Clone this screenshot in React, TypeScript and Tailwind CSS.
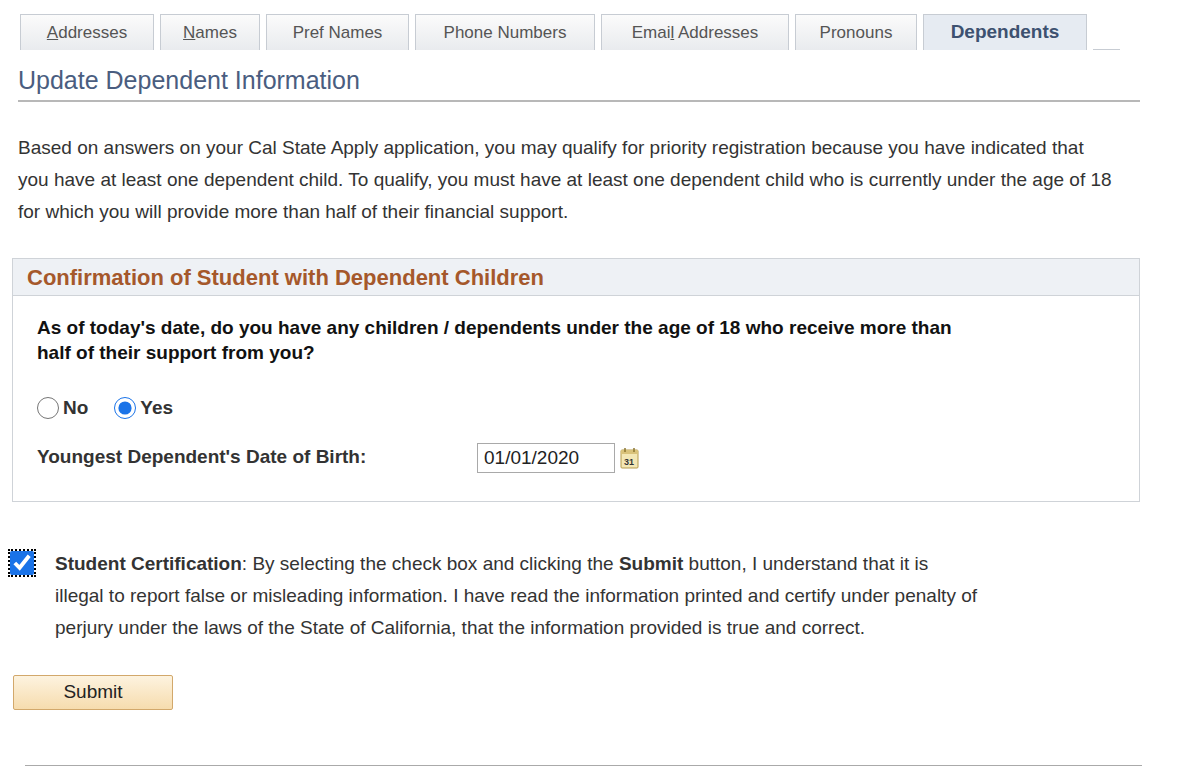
import React, { useState } from 'react';

const tabs = [
  { label: 'Addresses', u: 0, w: 134 },
  { label: 'Names', u: 0, w: 100 },
  { label: 'Pref Names', u: -1, w: 143 },
  { label: 'Phone Numbers', u: -1, w: 180 },
  { label: 'Email Addresses', u: 4, w: 188 },
  { label: 'Pronouns', u: -1, w: 122 },
];

const TabLabel = ({ label, u }: { label: string; u: number }) =>
  u < 0 ? (
    <span>{label}</span>
  ) : (
    <span className="whitespace-pre">
      {label.slice(0, u)}
      <span className="underline">{label[u]}</span>
      {label.slice(u + 1)}
    </span>
  );

const CalendarIcon = () => (
  <svg width="22" height="24" viewBox="0 0 22 24">
    <rect x="2" y="4" width="17" height="18" rx="1" fill="#f3e7b5" stroke="#b59a4a" />
    <rect x="2" y="4" width="17" height="4" fill="#d9c27a" />
    <line x1="6" y1="2" x2="6" y2="6" stroke="#8a7430" strokeWidth="1.5" />
    <line x1="15" y1="2" x2="15" y2="6" stroke="#8a7430" strokeWidth="1.5" />
    <text x="5" y="19" fontSize="9" fontWeight="bold" fill="#333" fontFamily="Liberation Sans, sans-serif">31</text>
  </svg>
);

export default function App() {
  const [answer, setAnswer] = useState('yes');
  const [certified, setCertified] = useState(true);

  return (
    <div className="w-[1200px] h-[781px] bg-white text-[#333] font-[Liberation_Sans]">
      <div className="flex items-end pl-[20px] pt-[14px] gap-[6px]">
        {tabs.map((t) => (
          <div
            key={t.label}
            style={{ width: t.w }}
            className="h-[36px] flex items-center justify-center border border-[#c7ccd3] border-b-0 bg-gradient-to-b from-[#fbfbfb] to-[#e9ebee] text-[17px] text-[#555]"
          >
            <TabLabel label={t.label} u={t.u} />
          </div>
        ))}
        <div className="w-[164px] h-[36px] flex items-center justify-center border border-[#c7ccd3] border-b-0 bg-[#e6ebf2] text-[19px] font-bold text-[#3d5170]">
          Dependents
        </div>
        <div className="w-[27px] border-b border-[#c7ccd3]" />
      </div>

      <div className="ml-[18px] w-[1122px] border-b-2 border-[#b8b8b8] pt-[16px] pb-[6px]">
        <h1 className="text-[25px] leading-[28px] text-[#4a5d80]">Update Dependent Information</h1>
      </div>

      <p className="ml-[18px] mt-[30px] w-[1100px] text-[19px] leading-[32px] text-[#333]">
        Based on answers on your Cal State Apply application, you may qualify for priority registration because you have
        indicated that you have at least one dependent child. To qualify, you must have at least one dependent child who is
        currently under the age of 18 for which you will provide more than half of their financial support.
      </p>

      <div className="ml-[12px] mt-[30px] w-[1128px] h-[244px] border border-[#cfd3d8]">
        <div className="h-[37px] flex items-center px-[14px] bg-[#eef1f5] border-b border-[#cfd3d8] text-[22px] font-bold text-[#a5582b]">
          Confirmation of Student with Dependent Children
        </div>
        <div className="pl-[24px] pt-[19px]">
          <p className="text-[19px] leading-[25px] font-bold text-[#111] w-[1060px]">
            As of today's date, do you have any children / dependents under the age of 18 who receive more than
            <br />
            half of their support from you?
          </p>
          <div className="flex items-center mt-[29px] text-[19px] font-bold text-[#333] gap-[26px]">
            <label className="flex items-center gap-[4px]">
              <input type="radio" checked={answer === 'no'} onChange={() => setAnswer('no')} className="w-[22px] h-[22px] m-0" />
              No
            </label>
            <label className="flex items-center gap-[4px]">
              <input type="radio" checked={answer === 'yes'} onChange={() => setAnswer('yes')} className="w-[22px] h-[22px] m-0 accent-[#1a73e8]" />
              Yes
            </label>
          </div>
          <div className="flex items-center mt-[20px]">
            <span className="w-[440px] text-[19px] font-bold text-[#333]">Youngest Dependent's Date of Birth:</span>
            <input
              defaultValue="01/01/2020"
              className="w-[138px] h-[30px] border border-[#a9a9a9] px-[6px] text-[19px] text-[#222] outline-none"
            />
            <span className="ml-[4px] flex"><CalendarIcon /></span>
          </div>
        </div>
      </div>

      <div className="flex mt-[46px] ml-[10px]">
        <div className="outline-dotted outline-2 outline-black h-[24px] w-[24px] mt-[3px] shrink-0">
          <input
            type="checkbox"
            checked={certified}
            onChange={() => setCertified(!certified)}
            className="w-[24px] h-[24px] m-0 accent-[#1a73e8] block"
          />
        </div>
        <p className="ml-[21px] w-[1070px] text-[19px] leading-[32px] text-[#333]">
          <span className="font-bold">Student Certification</span>: By selecting the check box and clicking the{' '}
          <span className="font-bold">Submit</span> button, I understand that it is
          <br />
          illegal to report false or misleading information. I have read the information printed and certify under penalty of
          <br />
          perjury under the laws of the State of California, that the information provided is true and correct.
        </p>
      </div>

      <button className="ml-[13px] mt-[31px] w-[160px] h-[35px] border border-[#d2a86b] rounded-[2px] bg-gradient-to-b from-[#fdf3df] to-[#f6dcae] text-[19px] text-[#222]">
        Submit
      </button>

      <div className="ml-[25px] mt-[55px] w-[1117px] border-b border-[#aaa]" />
    </div>
  );
}
